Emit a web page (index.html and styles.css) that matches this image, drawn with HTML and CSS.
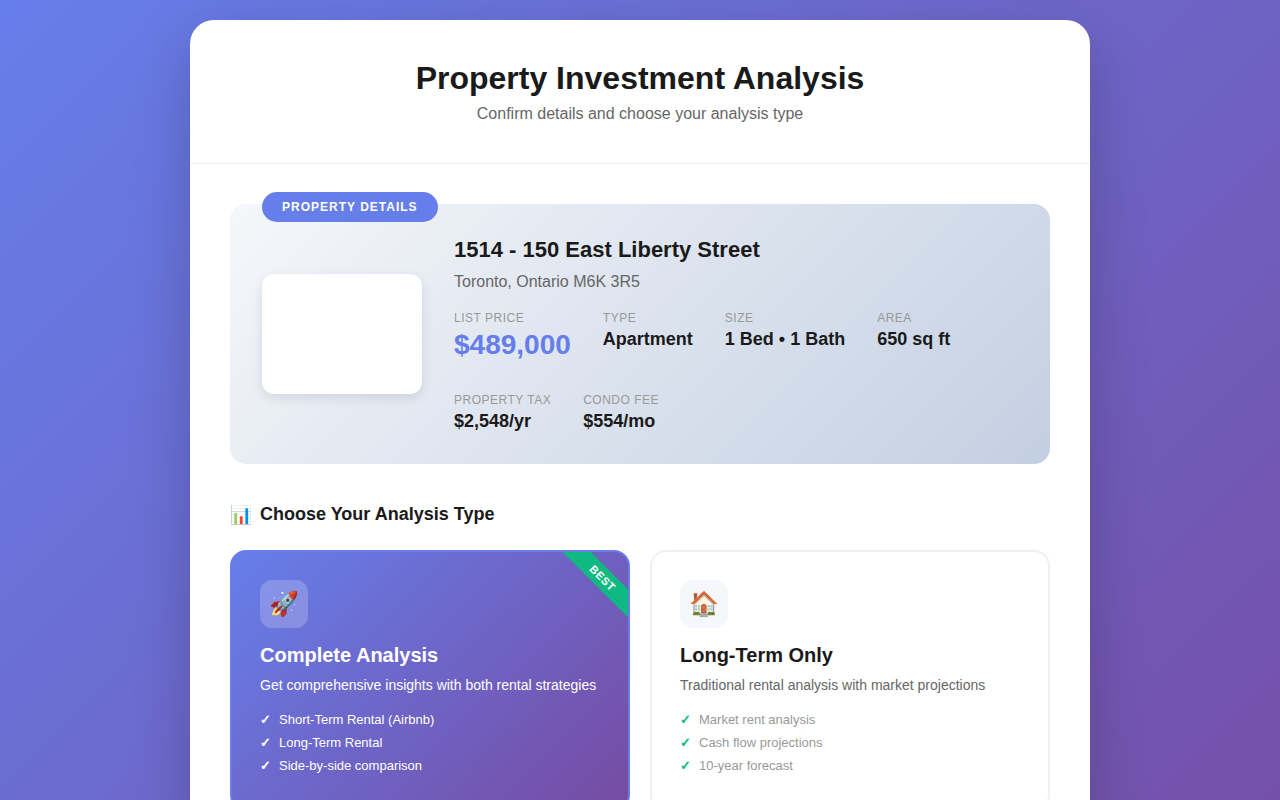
FILE: index.html
```html
<!DOCTYPE html>
<html lang="en">
<head>
<meta charset="utf-8">
<meta name="viewport" content="width=device-width, initial-scale=1">
<title>Property Investment Analysis</title>
<link rel="stylesheet" href="styles.css">
</head>
<body>
<main class="container">
  <header class="header">
    <h1 class="header-title">Property Investment Analysis</h1>
    <p class="header-subtitle">Confirm details and choose your analysis type</p>
  </header>
  <div class="content">
    <section class="property">
      <span class="property-badge">Property Details</span>
      <div class="property-image"></div>
      <div class="property-info">
        <h2 class="property-address">1514 - 150 East Liberty Street</h2>
        <p class="property-city">Toronto, Ontario M6K 3R5</p>
        <dl class="metrics">
          <div class="metric"><dt class="metric-label">List Price</dt><dd class="metric-value metric-price">$489,000</dd></div>
          <div class="metric"><dt class="metric-label">Type</dt><dd class="metric-value">Apartment</dd></div>
          <div class="metric"><dt class="metric-label">Size</dt><dd class="metric-value">1 Bed • 1 Bath</dd></div>
          <div class="metric"><dt class="metric-label">Area</dt><dd class="metric-value">650 sq ft</dd></div>
          <div class="metric"><dt class="metric-label">Property Tax</dt><dd class="metric-value">$2,548/yr</dd></div>
          <div class="metric"><dt class="metric-label">Condo Fee</dt><dd class="metric-value">$554/mo</dd></div>
        </dl>
      </div>
    </section>
    <h2 class="section-title"><span>📊</span><span>Choose Your Analysis Type</span></h2>
    <div class="options">
      <article class="option option-selected">
        <span class="ribbon">BEST</span>
        <div class="option-icon">🚀</div>
        <h3 class="option-title">Complete Analysis</h3>
        <p class="option-text">Get comprehensive insights with both rental strategies</p>
        <ul class="features">
          <li class="feature">Short-Term Rental (Airbnb)</li>
          <li class="feature">Long-Term Rental</li>
          <li class="feature">Side-by-side comparison</li>
        </ul>
      </article>
      <article class="option">
        <div class="option-icon">🏠</div>
        <h3 class="option-title">Long-Term Only</h3>
        <p class="option-text">Traditional rental analysis with market projections</p>
        <ul class="features">
          <li class="feature">Market rent analysis</li>
          <li class="feature">Cash flow projections</li>
          <li class="feature">10-year forecast</li>
        </ul>
      </article>
    </div>
  </div>
</main>
</body>
</html>
```

FILE: styles.css
```css
* {
  box-sizing: border-box;
  margin: 0;
  padding: 0;
}

body {
  min-height: 100vh;
  padding: 20px;
  background: linear-gradient(135deg, #667eea 0%, #764ba2 100%);
  color: #1a1a1a;
  font-family: "Liberation Sans", Arial, sans-serif;
}

.container {
  max-width: 900px;
  margin: 0 auto;
  overflow: hidden;
  border-radius: 24px;
  background: #fff;
  box-shadow: 0 20px 60px rgba(0, 0, 0, 0.2);
}

.header {
  padding: 40px;
  border-bottom: 1px solid #f0f0f0;
  text-align: center;
}

.header-title {
  margin-bottom: 8px;
  font-size: 32px;
}

.header-subtitle {
  color: #666;
  font-size: 16px;
}

.content {
  padding: 40px 40px 210px;
}

.property {
  position: relative;
  display: flex;
  align-items: center;
  gap: 32px;
  margin-bottom: 40px;
  padding: 32px;
  border-radius: 16px;
  background: linear-gradient(135deg, #f5f7fa 0%, #c3cfe2 100%);
}

.property-badge {
  position: absolute;
  top: -12px;
  left: 32px;
  padding: 8px 20px;
  border-radius: 20px;
  background: #667eea;
  color: #fff;
  font-size: 12px;
  font-weight: 600;
  letter-spacing: 1px;
  text-transform: uppercase;
}

.property-image {
  flex: none;
  width: 160px;
  height: 120px;
  border-radius: 12px;
  background: #fff;
  box-shadow: 0 4px 12px rgba(0, 0, 0, 0.1);
}

.property-info {
  flex: 1;
}

.property-address {
  margin-bottom: 10px;
  font-size: 22px;
  line-height: 27px;
}

.property-city {
  margin-bottom: 20px;
  color: #666;
  font-size: 16px;
}

.metrics {
  display: flex;
  flex-wrap: wrap;
  gap: 32px;
}

.metric {
  display: flex;
  flex-direction: column;
  gap: 4px;
}

.metric-label {
  color: #999;
  font-size: 12px;
  letter-spacing: 0.5px;
  text-transform: uppercase;
}

.metric-value {
  font-size: 18px;
  font-weight: 600;
}

.metric-price {
  color: #667eea;
  font-size: 28px;
}

.section-title {
  display: flex;
  align-items: flex-start;
  gap: 8px;
  margin-bottom: 24px;
  font-size: 18px;
}

.options {
  display: grid;
  grid-template-columns: repeat(auto-fit, minmax(280px, 1fr));
  gap: 20px;
}

.option {
  position: relative;
  overflow: hidden;
  padding: 28px;
  border: 2px solid #f0f0f0;
  border-radius: 16px;
  background: #fff;
}

.option-selected {
  border-color: #667eea;
  background: linear-gradient(135deg, #667eea 0%, #764ba2 100%);
  color: #fff;
}

.ribbon {
  position: absolute;
  top: 16px;
  right: -30px;
  padding: 4px 40px;
  background: #10b981;
  color: #fff;
  font-size: 11px;
  font-weight: 700;
  letter-spacing: 0.5px;
  line-height: 12px;
  transform: rotate(45deg);
}

.option-icon {
  display: flex;
  align-items: center;
  justify-content: center;
  width: 48px;
  height: 48px;
  margin-bottom: 16px;
  border-radius: 12px;
  background: #f5f7fa;
  font-size: 24px;
}

.option-selected .option-icon {
  background: rgba(255, 255, 255, 0.2);
}

.option-title {
  margin-bottom: 8px;
  font-size: 20px;
}

.option-text {
  margin-bottom: 16px;
  color: #666;
  font-size: 14px;
  line-height: 21px;
}

.features {
  list-style: none;
}

.feature {
  display: flex;
  align-items: center;
  gap: 8px;
  margin-bottom: 8px;
  color: #999;
  font-size: 13px;
}

.feature::before {
  content: "✓";
  color: #10b981;
  font-weight: 700;
}

.option-selected .option-text,
.option-selected .feature,
.option-selected .feature::before {
  color: #fff;
}
```
